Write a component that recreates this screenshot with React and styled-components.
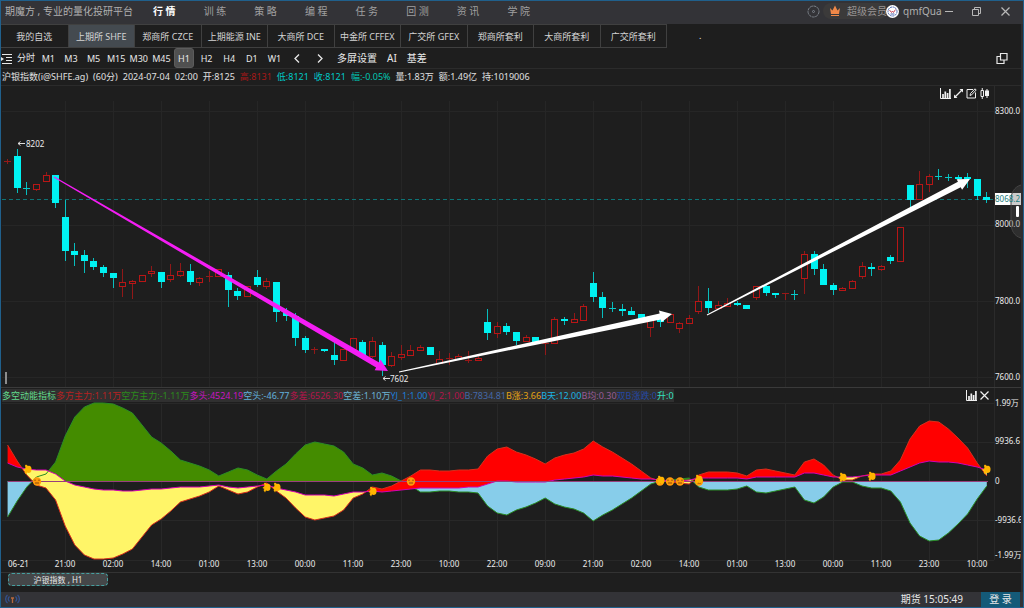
import styled, { createGlobalStyle, css } from "styled-components"

const STEP = 9.6
const FIRST_X = 7.6
const ZERO = 481
const UP = "#b81616"
const DOWN = "#00f2f2"
const PINK = "#f41df4"

const xOf = (i) => FIRST_X + STEP * i

// kind, body top, body bottom, high, low
const candles = [
  ["u", 161, 162, 159, 164], ["d", 156, 188, 149, 193], ["d", 188, 189, 182, 195], ["u", 184, 189, 184, 191],
  ["u", 175, 181, 172, 182], ["d", 175, 203, 175, 208], ["d", 217, 251, 200, 261], ["d", 251, 255, 243, 266],
  ["d", 255, 261, 250, 273], ["d", 261, 267, 258, 270], ["d", 267, 273, 265, 277], ["d", 273, 278, 273, 288],
  ["u", 282, 286, 269, 297], ["u", 281, 283, 280, 299], ["u", 275, 281, 275, 281], ["u", 271, 273, 266, 277],
  ["d", 272, 282, 272, 288], ["u", 275, 279, 264, 282], ["u", 271, 275, 263, 277], ["d", 271, 282, 264, 285],
  ["u", 278, 282, 277, 286], ["u", 276, 277, 271, 282], ["u", 269, 276, 269, 276], ["d", 275, 290, 272, 307],
  ["d", 291, 296, 288, 300], ["u", 286, 296, 286, 296], ["d", 277, 285, 270, 287], ["u", 281, 286, 278, 289],
  ["d", 282, 312, 282, 322], ["d", 312, 316, 308, 321], ["d", 316, 338, 313, 346], ["d", 338, 350, 336, 353],
  ["u", 349, 350, 347, 354], ["d", 349, 351, 349, 352], ["d", 355, 360, 342, 365], ["u", 349, 360, 349, 360],
  ["u", 338, 349, 338, 349], ["d", 342, 356, 340, 356], ["u", 341, 356, 337, 358], ["d", 345, 365, 342, 376],
  ["u", 356, 365, 352, 367], ["u", 354, 357, 345, 360], ["u", 350, 355, 345, 355], ["u", 347, 350, 345, 351],
  ["d", 347, 355, 347, 355], ["u", 359, 363, 351, 363], ["u", 358, 359, 353, 365], ["u", 356, 359, 354, 360],
  ["u", 360, 361, 351, 363], ["u", 358, 360, 355, 361], ["d", 322, 333, 309, 340], ["u", 326, 333, 322, 338],
  ["d", 326, 332, 323, 335], ["d", 332, 341, 332, 345], ["u", 337, 341, 335, 342], ["d", 337, 342, 337, 342],
  ["u", 343, 344, 343, 355], ["u", 319, 343, 317, 344], ["d", 319, 321, 317, 325], ["u", 319, 322, 313, 322],
  ["u", 306, 320, 304, 321], ["d", 283, 297, 272, 302], ["d", 297, 308, 292, 318], ["d", 308, 309, 302, 312],
  ["d", 309, 311, 304, 316], ["d", 311, 315, 307, 315], ["d", 314, 319, 314, 319], ["u", 316, 327, 316, 337],
  ["d", 318, 322, 318, 327], ["u", 314, 322, 314, 322], ["u", 323, 328, 322, 333], ["u", 318, 323, 315, 324],
  ["u", 301, 311, 286, 314], ["d", 301, 308, 288, 313], ["u", 305, 308, 301, 308], ["u", 303, 306, 298, 307],
  ["d", 303, 305, 301, 306], ["d", 305, 309, 305, 309], ["u", 286, 297, 286, 300], ["d", 286, 293, 285, 296],
  ["d", 293, 295, 293, 298], ["u", 293, 294, 293, 300], ["d", 294, 295, 290, 300], ["u", 254, 278, 251, 294],
  ["d", 254, 269, 251, 275], ["d", 269, 285, 264, 285], ["d", 285, 290, 283, 295], ["u", 288, 290, 287, 290],
  ["u", 281, 288, 280, 288], ["u", 266, 276, 262, 279], ["d", 267, 269, 263, 276], ["u", 266, 269, 265, 271],
  ["d", 257, 261, 255, 264], ["u", 227, 261, 227, 261], ["d", 185, 200, 185, 207], ["u", 184, 199, 171, 199],
  ["u", 176, 184, 174, 192], ["d", 176, 177, 169, 180], ["d", 177, 178, 174, 181], ["d", 177, 179, 175, 180],
  ["d", 177, 179, 173, 188], ["d", 179, 196, 179, 200], ["d", 197, 200, 192, 203],
]

const force = [
  36, 20, 6, -4, -7, -19, -45, -64, -74, -78, -78, -77, -73, -68, -56, -44, -38, -30, -21, -18, -15, -11, -5, -9, -13,
  -11, -6, -2, -10, -17, -27, -36, -39, -37, -35, -29, -17, -13, -6, -8, -5, 0, 5, 11, 11, 10, 10, 11, 11, 12, 25, 32,
  34, 29, 26, 22, 17, 23, 26, 28, 32, 40, 34, 29, 23, 17, 10, 3, 0, -1, -2, -3, 6, 9, 9, 9, 8, 5, 11, 12, 10, 8, 6, 19,
  22, 16, 6, 1, 1, 5, 7, 7, 10, 21, 42, 55, 60, 59, 52, 43, 33, 18, 5,
]

const trend = [
  18, 14, 12, 11, 11, 7, 0, -4, -6, -8, -9, -9, -10, -10, -9, -8, -8, -7, -6, -6, -6, -5, -4, -6, -7, -6, -5, -4, -7,
  -9, -11, -14, -14, -14, -15, -13, -11, -11, -10, -11, -10, -9, -8, -7, -7, -7, -7, -7, -6, -6, -3, 0, 0, -1, -1, -1,
  -1, 1, 2, 3, 4, 6, 5, 5, 4, 3, 2, 2, 1, 0, 0, 1, 3, 3, 3, 3, 3, 2, 4, 4, 4, 4, 4, 8, 8, 6, 4, 4, 4, 5, 6, 6, 6, 10,
  14, 18, 20, 19, 19, 18, 16, 14, 11,
]

const mirror = force.map((v) => -v)
const flat = force.map(() => 0)

const lineOf = (values) => values.map((v, i) => `${xOf(i)},${ZERO - v}`).join(" ")

// area between two series, only where sign * (a - b) is positive
const areaOf = (a, b, sign) => {
  const points = []
  a.forEach((value, i) => {
    points.push([i, value, b[i]])
    if (i + 1 === a.length) return
    const here = value - b[i]
    const next = a[i + 1] - b[i + 1]
    if (here * next < 0) {
      const t = here / (here - next)
      const y = value + (a[i + 1] - value) * t
      points.push([i + t, y, y])
    }
  })
  const edge = points.map(([i, p, q]) => `${xOf(i)},${ZERO - (sign * (p - q) > 0 ? p : q)}`)
  const base = points.map(([i, , q]) => `${xOf(i)},${ZERO - q}`).reverse()
  return [...edge, ...base].join(" ")
}

const gridX = Array.from({ length: 20 }, (_, i) => 65 + 48 * i)

const times = [
  "21:00", "02:00", "14:00", "01:00", "13:00", "00:00", "11:00", "23:00", "10:00", "22:00",
  "09:00", "21:00", "02:00", "14:00", "01:00", "13:00", "00:00", "11:00", "23:00", "10:00",
]

const menu = ["行 情", "训 练", "策 略", "编 程", "任 务", "回 测", "资 讯", "学 院"]

const markets = [
  "我的自选", "上期所 SHFE", "郑商所 CZCE", "上期能源 INE", "大商所 DCE",
  "中金所 CFFEX", "广交所 GFEX", "郑商所套利", "大商所套利", "广交所套利",
]

const periods = ["M1", "M3", "M5", "M15", "M30", "M45", "H1", "H2", "H4", "D1", "W1"]

const quote = [
  ["沪银指数(i@SHFE.ag)"], ["(60分)"], ["2024-07-04"], ["02:00"], ["开:8125"],
  ["高:8131", "#a81818"], ["低:8121", "#00c8c8"], ["收:8121", "#00c8c8"], ["幅:-0.05%", "#00c8b4"],
  ["量:1.83万"], ["额:1.49亿"], ["持:1019006"],
]

const legend = [
  ["多空动能指标", "#62dc8c"], ["多方主力:1.11万", "#b42222"], ["空方主力:-1.11万", "#2c8a1c"],
  ["多头:4524.19", "#c814c0"], ["空头:-46.77", "#62b0dc"], ["多差:6526.30", "#b4144c"],
  ["空差:1.10万", "#6cb4d4"], ["YJ_1:1.00", "#1c7cd8"], ["YJ_2:1.00", "#b4144c"],
  ["B:7834.81", "#4468a8"], ["B涨:3.66", "#e6a414"], ["B天:12.00", "#1cb4e4"],
  ["B均:0.30", "#985c98"], ["双B涨跌:0", "#2448a4"], ["升:0", "#34e0c0"],
]

const hands = [[28, 469], [267, 487], [277, 487], [373, 491], [661, 480], [699, 479], [843, 477], [872, 476], [987, 469]]
const coins = [[37, 481], [411, 481], [660, 481], [670, 481], [680, 481], [699, 481]]

const Candle = ({ index, data: [kind, top, bottom, high, low] }) => {
  const x = Math.round(xOf(index) - 0.5)
  const color = kind === "u" ? UP : DOWN
  const thin = bottom - top < 2
  return (
    <g>
      <path d={`M${x + 0.5} ${high}V${top}M${x + 0.5} ${bottom}V${low}`} stroke={color} opacity="0.75" />
      {kind === "u" && !thin ? (
        <rect x={x - 2.5} y={top + 0.5} width="6" height={bottom - top} fill="none" stroke={color} />
      ) : (
        <rect x={x - 3} y={top} width="7" height={bottom - top} fill={color} opacity={thin ? 0.8 : 1} />
      )}
    </g>
  )
}

const Arrow = ({ from, to, color }) => {
  const length = Math.hypot(to[0] - from[0], to[1] - from[1])
  const angle = (Math.atan2(to[1] - from[1], to[0] - from[0]) * 180) / Math.PI
  const neck = length - 12
  return (
    <path
      transform={`translate(${from[0]} ${from[1]}) rotate(${angle})`}
      d={`M0 -.5L${neck} -3L${neck} -6L${length} 0L${neck} 6L${neck} 3L0 .5Z`}
      fill={color}
    />
  )
}

const BarsIcon = () => (
  <svg width="11" height="11" viewBox="0 0 11 11" fill="none" stroke="currentColor">
    <path d="M.5 0V10.5H11" />
    <path d="M3 10V6M5.300 10V3.500M7.600 10V5M9.900 10V1" strokeWidth="1.7" />
  </svg>
)

const CloseIcon = () => (
  <svg width="9" height="9" viewBox="0 0 9 9" stroke="currentColor" strokeWidth="1.2">
    <path d="M.5 .5L8.500 8.500M8.500 .5L.5 8.500" />
  </svg>
)

const PriceChart = () => (
  <Plot viewBox="1 100 1020 288" role="img" aria-label="沪银指数 60分">
    <g stroke="#262626">
      {gridX.map((x) => <path key={x} d={`M${x + 0.5} 101V387`} />)}
      {[111, 225, 301, 377].map((y) => <path key={y} d={`M2 ${y + 0.5}H994`} />)}
    </g>
    <path d="M994.500 86V387" stroke="#2b2b2b" />
    <path d="M1 387.500H1021" stroke="#3a3a3a" />
    <path d="M2 199.500H994" stroke="#0d7476" strokeDasharray="4 3" />
    {candles.map((c, i) => <Candle key={i} index={i} data={c} />)}
    <Arrow from={[54, 177]} to={[388, 371]} color={PINK} />
    <Arrow from={[399, 372]} to={[672, 314]} color="#fff" />
    <Arrow from={[707, 315]} to={[970, 179]} color="#fff" />
    <g stroke="#dcdcdc" fill="none">
      <path d="M25 143.500H18M20.500 141.500L18 143.500L20.500 145.500" />
      <path d="M390 378.500H383M385.500 376.500L383 378.500L385.500 380.500" />
    </g>
    <Label x="26" y="147">8202</Label>
    <Label x="390" y="382">7602</Label>
    <rect x="5" y="372" width="2" height="12" fill="#8c8c8c" />
    <Label x="995" y="114">8300.0</Label>
    <Label x="995" y="227">8000.0</Label>
    <Label x="995" y="304">7800.0</Label>
    <Label x="995" y="380">7600.0</Label>
    <rect x="995" y="193" width="26" height="12" fill="#fff" />
    <path d="M1021 185C1014 187 1011 193 1011 200V223C1011 230 1014 236 1021 238" fill="#555" fillOpacity=".3" stroke="#444" />
    <Label x="995" y="202" $tone="#1c7c7c">8068.2</Label>
    <rect x="1016" y="206" width="3" height="11" rx="1" fill="#fff" />
  </Plot>
)

const ForceChart = () => (
  <Plot viewBox="1 402 1020 170" role="img" aria-label="多空动能指标">
    <g stroke="#282828">
      {gridX.map((x) => <path key={x} d={`M${x + 0.5} 403V560`} />)}
      {[403, 442, 520, 560].map((y) => <path key={y} d={`M2 ${y + 0.5}H994`} />)}
      <path d="M994.500 388V560" />
    </g>
    <polygon points={areaOf(mirror, flat, 1)} fill="#448c00" />
    <polygon points={areaOf(mirror, flat, -1)} fill="#87cdea" />
    <polygon points={areaOf(force, trend, -1)} fill="#fff568" />
    <polyline points={lineOf(mirror)} fill="none" stroke="#2a8c26" />
    <polygon points={areaOf(force, trend, 1)} fill="#ff0000" />
    <polyline points={lineOf(force)} fill="none" stroke="#d8301c" />
    <polyline points={lineOf(trend)} fill="none" stroke="#d400b4" />
    <path d={`M8 ${ZERO + 0.5}H988`} stroke="#98407c" />
    {coins.map(([x, y]) => (
      <g key={`${x}-${y}`}>
        <circle cx={x} cy={y + 0.5} r="4.200" fill="#ff9a0a" />
        <path d={`M${x - 2} ${y}V${y - 1.5}M${x + 2} ${y}V${y - 1.5}M${x - 2} ${y + 2}H${x + 2}`} stroke="#8a4a10" fill="none" />
      </g>
    ))}
    {hands.map(([x, y]) => (
      <path
        key={`${x}-${y}`}
        transform={`translate(${x} ${y})`}
        d="M-3-3.500L-2-4.500L0-3C2-4 4-2 3.500 1C3.500 3.500 1 4.500-1 3.500L-2 5.500L-3.500 3L-2.500 2L-4.500 1L-2.500-1Z"
        fill="#ffb400"
      />
    ))}
    <Label x="995" y="406">1.99万</Label>
    <Label x="995" y="444">9936.6</Label>
    <Label x="995" y="484">0</Label>
    <Label x="995" y="523">-9936.6</Label>
    <Label x="995" y="558">-1.99万</Label>
    <Label x="8" y="567">06-21</Label>
    {times.map((t, i) => <Label key={i} x={gridX[i]} y="567" textAnchor="middle">{t}</Label>)}
  </Plot>
)

const App = () => {
  return (
    <>
      <GlobalStyle />
      <Window>
        <TitleBar>
          <Slogan>期魔方 , 专业的量化投研平台</Slogan>
          <Menu>
            {menu.map((m, i) => <MenuLink key={m} href="#" $active={i === 0}>{m}</MenuLink>)}
          </Menu>
          <Account>
            <IconButton aria-label="设置">
              <svg width="13" height="13" viewBox="0 0 13 13" fill="none" stroke="#7c828a">
                <circle cx="6.500" cy="6.500" r="5.500" strokeDasharray="3 .6" />
                <circle cx="6.500" cy="6.500" r="1" />
              </svg>
            </IconButton>
            <Member>
              <svg width="12" height="12" viewBox="0 0 12 12" fill="#f08848">
                <path d="M1 3L3.500 5.500L6 .5L8.500 5.500L11 3L10 9H2ZM2 10H10V11H2Z" />
              </svg>
              超级会员
            </Member>
            <Avatar width="13" height="13" viewBox="0 0 13 13" fill="none">
              <circle cx="6.500" cy="6.500" r="6.500" fill="#fff" />
              <circle cx="6.500" cy="6.500" r="4.500" stroke="#4868b4" strokeDasharray="2 .6" />
              <path d="M3.500 5L5.500 7.500L6.500 6L7.500 7.500L9.500 4.500" stroke="#c84c60" />
              <path d="M4.500 9H8.500" stroke="#4868b4" />
            </Avatar>
            <UserName>qmfQua</UserName>
          </Account>
          <WindowButtons>
            <IconButton aria-label="最小化">
              <svg width="9" height="9" viewBox="0 0 9 9" stroke="currentColor"><path d="M0 4.500H8" /></svg>
            </IconButton>
            <IconButton aria-label="还原">
              <svg width="9" height="9" viewBox="0 0 9 9" fill="none" stroke="currentColor">
                <path d="M.5 2.500H6.500V8.500H.5ZM2.500 2V.5H8.500V6.500H7" />
              </svg>
            </IconButton>
            <IconButton aria-label="关闭"><CloseIcon /></IconButton>
          </WindowButtons>
        </TitleBar>
        <Body>
          <MarketRow>
            <Markets>
              {markets.map((m, i) => <MarketTab key={m} $active={i === 1}>{m}</MarketTab>)}
            </Markets>
            <Dot>.</Dot>
          </MarketRow>
          <Toolbar>
            <IconButton aria-label="列表">
              <svg width="12" height="11" viewBox="0 0 12 11" stroke="currentColor">
                <path d="M1 1.500H11M5 4.500H11M5 7.500H11M1 10.500H11" />
                <path d="M0 4L3 6L0 8Z" fill="currentColor" stroke="none" />
              </svg>
            </IconButton>
            <TickButton>分时</TickButton>
            <Periods>
              {periods.map((p) => <PeriodButton key={p} $active={p === "H1"}>{p}</PeriodButton>)}
              <PeriodButton aria-label="向左">
                <svg width="6" height="9" viewBox="0 0 6 9" fill="none" stroke="currentColor" strokeWidth="1.3"><path d="M5 .5L1 4.500L5 8.500" /></svg>
              </PeriodButton>
              <PeriodButton aria-label="向右">
                <svg width="6" height="9" viewBox="0 0 6 9" fill="none" stroke="currentColor" strokeWidth="1.3"><path d="M1 .5L5 4.500L1 8.500" /></svg>
              </PeriodButton>
            </Periods>
            <Extras>
              <ToolButton>多屏设置</ToolButton>
              <ToolButton>AI</ToolButton>
              <ToolButton>基差</ToolButton>
            </Extras>
            <Detach>
              <IconButton aria-label="弹出窗口">
                <svg width="12" height="11" viewBox="0 0 12 11" fill="none" stroke="currentColor" strokeWidth="1.2">
                  <path d="M4.500 .5H11V7H4.500ZM4 3.500H1V10.500H8V7.500" />
                </svg>
              </IconButton>
            </Detach>
          </Toolbar>
          <QuoteRow>
            {quote.map(([text, tone]) => <Quote key={text} $tone={tone}>{text}</Quote>)}
          </QuoteRow>
          <Panel>
            <ChartTools>
              <IconButton aria-label="指标"><BarsIcon /></IconButton>
              <IconButton aria-label="放大">
                <svg width="9" height="9" viewBox="0 0 9 9" fill="currentColor">
                  <path d="M5.500 0H9V3.500L7.700 2.200L2.200 7.700L3.500 9H0V5.500L1.300 6.800L6.800 1.300Z" />
                </svg>
              </IconButton>
              <IconButton aria-label="编辑">
                <svg width="11" height="11" viewBox="0 0 11 11" fill="none" stroke="currentColor">
                  <path d="M7 1.500H1V10H9.500V4.500M4 7.500L4.500 5.500L9 .8L10.200 2L5.700 6.800Z" />
                </svg>
              </IconButton>
              <IconButton aria-label="K线样式">
                <svg width="9" height="11" viewBox="0 0 9 11" fill="none" stroke="currentColor">
                  <path d="M1 2.500H3.500V8.500H1ZM2.250 0V2.500M2.250 8.500V11M7 1V10" />
                  <path d="M5 2.500H9V8H5Z" fill="currentColor" stroke="none" />
                </svg>
              </IconButton>
            </ChartTools>
            <PriceChart />
          </Panel>
          <Panel>
            <LegendRow>
              <Legend>
                {legend.map(([text, tone]) => <LegendItem key={text} $tone={tone}>{text}</LegendItem>)}
              </Legend>
              <LegendTools>
                <IconButton aria-label="指标"><BarsIcon /></IconButton>
                <IconButton aria-label="关闭指标"><CloseIcon /></IconButton>
              </LegendTools>
            </LegendRow>
            <ForceChart />
          </Panel>
          <SheetRow>
            <SheetTab>沪银指数 , H1</SheetTab>
          </SheetRow>
        </Body>
        <StatusBar>
          <svg width="15" height="11" viewBox="0 0 15 11" fill="none" stroke="#34508c" strokeWidth="1.3">
            <path d="M2.500 1C0 3 0 7 2.500 9M4.500 2.500C3 4 3 6 4.500 7.500M12.500 1C15 3 15 7 12.500 9M10.500 2.500C12 4 12 6 10.500 7.500" />
            <path d="M7.500 4V9M6 4H9" stroke="#b8683c" />
          </svg>
          <Clock>期货 15:05:49</Clock>
          <Login>登 录</Login>
        </StatusBar>
      </Window>
    </>
  )
}

export default App

const GlobalStyle = createGlobalStyle`
    * {
        box-sizing: border-box;
    }
    body {
        margin: 0;
        background-color: #1e1e1e;
        font-family: "Noto Sans", "Noto Sans CJK SC", sans-serif;
        font-size: 9px;
        color: #e8e8e8;
    }
    button {
        padding: 0;
        border: none;
        background: none;
        font: inherit;
        color: inherit;
        white-space: nowrap;
    }
`

const Window = styled.div`
    display: flex;
    flex-direction: column;
    min-height: 100vh;
    border: 1px solid #20608c;
    background-color: #1e1e1e;
`

const TitleBar = styled.header`
    display: flex;
    align-items: center;
    height: 23px;
    padding-left: 4px;
    padding-bottom: 3px;
    background-color: #333337;
    font-size: 10px;
    color: #b0b0b0;
`

const Slogan = styled.span`
    width: 148px;
    line-height: 20px;
    white-space: nowrap;
`

const Menu = styled.nav`
    display: grid;
    grid-template-columns: repeat(8, 1fr);
    width: 405px;
    line-height: 20px;
`

const MenuLink = styled.a`
    color: ${({ $active }) => ($active ? "#fff" : "#a0a0a0")};
    font-weight: ${({ $active }) => ($active ? 700 : 400)};
    text-decoration: none;
    white-space: nowrap;
`

const Account = styled.div`
    display: flex;
    align-items: center;
    margin-left: auto;
    margin-right: 5px;
`

const IconButton = styled.button`
    display: flex;
    align-items: center;
    justify-content: center;
`

const Member = styled.div`
    display: flex;
    align-items: center;
    gap: 6px;
    height: 16px;
    margin-left: 3px;
    padding-left: 6px;
    border-radius: 8px;
    background-color: #3b3a3a;
    line-height: 16px;
    color: #989494;
`

const Avatar = styled.svg`
    margin-left: -1px;
`

const UserName = styled.span`
    width: 37px;
    margin-left: 4px;
    white-space: nowrap;
`

const WindowButtons = styled.div`
    display: grid;
    grid-template-columns: 16px 28px 28px;
    column-gap: 1px;
    margin-right: 4px;
    color: #b8b8b8;

    ${IconButton}:first-child {
        justify-content: flex-start;
    }
`

const Body = styled.main`
    flex: 1;
    border-right: 2px solid #2c2c30;
`

const MarketRow = styled.div`
    display: flex;
    height: 24px;
`

const Markets = styled.div`
    display: grid;
    grid-template-columns: repeat(10, 1fr);
    width: 666px;
    border: 1px solid #404040;
    border-left: none;
`

const MarketTab = styled.button`
    border-left: 1px solid #404040;
    color: #d4d4d4;
    background-color: ${({ $active }) => ($active ? "#444a50" : "transparent")};

    &:first-child {
        border-left: none;
    }
`

const Dot = styled.span`
    margin-left: 32px;
    line-height: 24px;
`

const Toolbar = styled.div`
    display: flex;
    align-items: center;
    height: 21px;
    border-bottom: 1px solid #2b2b2b;
`

const ToolButton = styled.button`
    line-height: 20px;
`

const TickButton = styled(ToolButton)`
    margin-left: 4px;
`

const Periods = styled.div`
    display: grid;
    grid-template-columns: repeat(13, 1fr);
    width: 294px;
    height: 20px;
    margin-left: 2px;
`

const PeriodButton = styled.button`
    display: flex;
    align-items: center;
    justify-content: center;
    justify-self: center;
    width: 20px;

    ${({ $active }) =>
      $active &&
      css`
        border: 1px solid #5c5c5c;
        border-radius: 3px;
        background-color: #505050;
    `}
`

const Extras = styled.div`
    display: flex;
    gap: 10px;
    margin-left: 6px;
    font-size: 10px;
`

const Detach = styled.div`
    margin-left: auto;
    margin-right: 13px;
`

const QuoteRow = styled.div`
    display: flex;
    gap: 5px;
    height: 17px;
    padding-left: 1px;
    border-bottom: 1px solid #2b2b2b;
    line-height: 15px;
    white-space: nowrap;
`

const Quote = styled.span`
    color: ${({ $tone }) => $tone || "#e0e0e0"};
`

const Panel = styled.section`
    overflow: hidden;
`

const ChartTools = styled.div`
    display: flex;
    align-items: center;
    justify-content: flex-end;
    gap: 3px;
    height: 14px;
    padding-right: 32px;
    color: #f0f0f0;
`

const Plot = styled.svg`
    display: block;
    width: 100%;
    height: auto;
    overflow: visible;
`

const Label = styled.text`
    font-size: 8px;
    fill: ${({ $tone }) => $tone || "#ececec"};
`

const LegendRow = styled.div`
    display: flex;
    align-items: center;
    justify-content: space-between;
    height: 14px;
    padding-left: 1px;
    padding-right: 32px;
`

const Legend = styled.div`
    display: flex;
    height: 13px;
    background-color: #303030;
    line-height: 13px;
    white-space: nowrap;
`

const LegendItem = styled.span`
    color: ${({ $tone }) => $tone};
`

const LegendTools = styled.div`
    display: flex;
    align-items: center;
    gap: 3px;
    color: #f0f0f0;
`

const SheetRow = styled.div`
    height: 20px;
    padding-left: 7px;
    border-top: 1px solid #333;
`

const SheetTab = styled.button`
    display: block;
    width: 100px;
    height: 13px;
    border: 1px dashed #46a0a0;
    border-radius: 4px;
    background-color: #454749;
    font-size: 8px;
    line-height: 11px;
`

const StatusBar = styled.footer`
    display: flex;
    align-items: center;
    height: 15px;
    padding-left: 4px;
    padding-right: 3px;
    background-color: #333337;
    font-size: 10px;
    line-height: 15px;
`

const Clock = styled.span`
    margin-left: auto;
    margin-right: 18px;
`

const Login = styled.button`
    width: 39px;
    height: 15px;
    background-color: #145a78;
`
